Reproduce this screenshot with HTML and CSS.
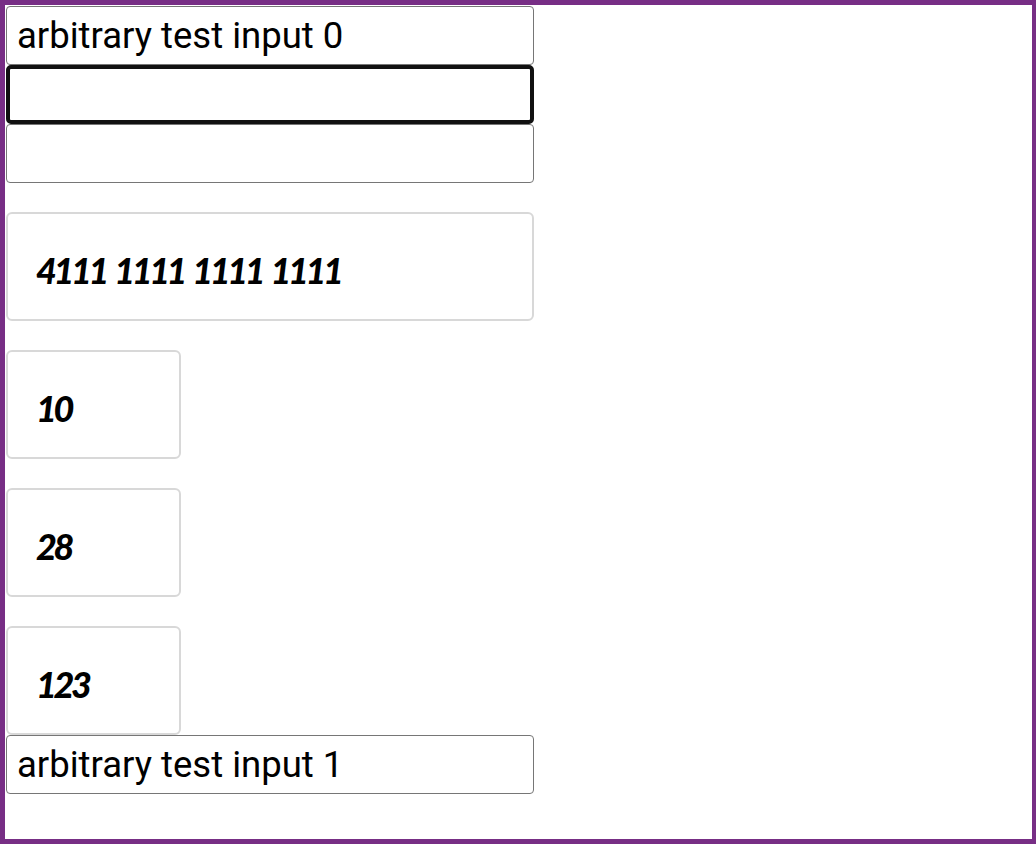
FILE: index.html
```html
<!DOCTYPE html>
<html>
<head>
<meta charset="utf-8">
<link rel="stylesheet" href="styles.css">
</head>
<body>
<div class="frame">
  <input class="field" type="text" value="arbitrary test input 0">
  <input class="field focused" type="text" value="">
  <input class="field" type="text" value="">
  <div class="card wide"><span class="card-text">4111 1111 1111 1111</span></div>
  <div class="card small"><span class="card-text">10</span></div>
  <div class="card small"><span class="card-text">28</span></div>
  <div class="card small"><span class="card-text">123</span></div>
  <input class="field last" type="text" value="arbitrary test input 1">
</div>
</body>
</html>
```
FILE: styles.css
```css
html, body {
  margin: 0;
  padding: 0;
  background: #ffffff;
}
.frame {
  box-sizing: border-box;
  width: 1036px;
  height: 844px;
  border: 5px solid #772e85;
  border-right-width: 4px;
  padding: 1px;
  display: flex;
  flex-direction: column;
  align-items: flex-start;
}
.field {
  box-sizing: border-box;
  width: 528px;
  height: 59px;
  margin: 0;
  border: 1px solid #767676;
  border-radius: 4px;
  padding: 0 10px;
  font-family: Roboto, "Liberation Sans", sans-serif;
  font-size: 36.5px;
  color: #000;
  background: #fff;
  outline: none;
}
.focused {
  border: 4px solid #111111;
  border-radius: 5px;
}
.card {
  box-sizing: border-box;
  height: 109px;
  margin-top: 29px;
  border: 2px solid #d8d8d8;
  border-radius: 6px;
  display: flex;
  align-items: center;
  padding-left: 28px;
}
.wide { width: 528px; margin-top: 29px; }
.small { width: 175px; }
.card-text {
  font-family: Lato, "Open Sans", sans-serif;
  font-weight: 900;
  font-style: italic;
  font-size: 36px;
  letter-spacing: -3.4px;
  word-spacing: 4px;
  color: #000;
  padding-top: 7px;
}
.last { margin-top: 0; }
```
